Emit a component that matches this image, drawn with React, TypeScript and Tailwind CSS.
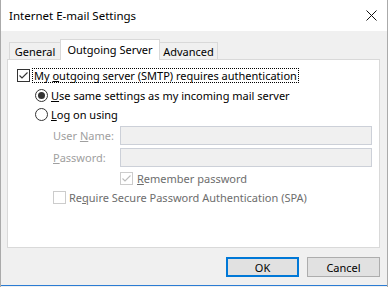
import React from "react";

const font = { fontFamily: '"Noto Sans", sans-serif' };

function CheckBox({ checked, disabled }: { checked?: boolean; disabled?: boolean }) {
  const border = disabled ? "border-[#cccccc]" : "border-[#333333]";
  return (
    <div className={`w-[13px] h-[13px] border ${border} bg-white flex items-center justify-center shrink-0`}>
      {checked && (
        <svg width="11" height="11" viewBox="0 0 11 11">
          <path d="M1.5 5.5 L4 8 L9.5 2.5" fill="none" stroke={disabled ? "#bcbcbc" : "#333333"} strokeWidth="1.1" />
        </svg>
      )}
    </div>
  );
}

function Radio({ checked }: { checked?: boolean }) {
  return (
    <div className="w-[13px] h-[13px] rounded-full border border-[#333333] bg-white flex items-center justify-center shrink-0">
      {checked && <div className="w-[7px] h-[7px] rounded-full bg-[#333333]" />}
    </div>
  );
}

export default function App() {
  return (
    <div
      className="w-[388px] h-[287px] bg-[#f0f0f0] border-l border-r border-[#aaaaaa] flex flex-col text-[11px] text-black overflow-hidden"
      style={font}
    >
      {/* Title bar */}
      <div className="h-[31px] bg-white flex items-center justify-between pl-[8px] pr-[9px] shrink-0">
        <span className="text-[11.5px] leading-none">Internet E-mail Settings</span>
        <svg width="11" height="11" viewBox="0 0 11 11" className="mr-[1px]">
          <path d="M0.5 0.5 L10.5 10.5 M10.5 0.5 L0.5 10.5" stroke="#111" strokeWidth="1" />
        </svg>
      </div>

      {/* Tabs */}
      <div className="flex items-end pl-[8px] mt-[7px] h-[21px] relative z-10">
        <div className="h-[17px] w-[52px] border border-b-0 border-[#d9d9d9] flex items-center justify-center leading-none pt-[1px]">
          General
        </div>
        <div className="h-[21px] w-[100px] -ml-px bg-white border border-b-0 border-[#d9d9d9] flex items-start pt-[4px] justify-center leading-none -mb-px">
          <span>Outgoing Server</span>
        </div>
        <div className="h-[17px] w-[59px] -ml-px border border-b-0 border-[#d9d9d9] flex items-center justify-center leading-none pt-[1px]">
          Advanced
        </div>
      </div>

      {/* Panel */}
      <div className="ml-[6px] w-[373px] h-[189px] bg-white border border-[#d9d9d9] flex flex-col shrink-0">
        <div className="mt-[8px] h-[15px] flex items-center pl-[9px]">
          <CheckBox checked />
          <span className="ml-[2px] h-[15px] px-[1px] border border-dotted border-black flex items-center leading-none whitespace-nowrap">
            My&nbsp;<u>o</u>utgoing server (SMTP) requires authentication
          </span>
        </div>
        <div className="mt-[5px] h-[15px] flex items-center pl-[27px]">
          <Radio checked />
          <span className="ml-[3px] leading-none whitespace-nowrap">
            <u>U</u>se same settings as my incoming mail server
          </span>
        </div>
        <div className="mt-[4px] h-[15px] flex items-center pl-[27px]">
          <Radio />
          <span className="ml-[3px] leading-none whitespace-nowrap">
            <u>L</u>og on using
          </span>
        </div>
        <div className="mt-[4px] h-[19px] flex items-center pl-[45px]">
          <span className="w-[67px] text-[#a0a0a0] leading-none whitespace-nowrap">
            User <u>N</u>ame:
          </span>
          <div className="w-[252px] h-[19px] bg-[#f0f0f0] border border-[#ccd0d8]" />
        </div>
        <div className="mt-[3px] h-[19px] flex items-center pl-[45px]">
          <span className="w-[67px] text-[#a0a0a0] leading-none whitespace-nowrap">
            <u>P</u>assword:
          </span>
          <div className="w-[252px] h-[19px] bg-[#f0f0f0] border border-[#ccd0d8]" />
        </div>
        <div className="mt-[4px] h-[15px] flex items-center pl-[112px]">
          <CheckBox checked disabled />
          <span className="ml-[4px] text-[#6d6d6d] leading-none whitespace-nowrap">
            <u>R</u>emember password
          </span>
        </div>
        <div className="mt-[4px] h-[15px] flex items-center pl-[45px]">
          <CheckBox disabled />
          <span className="ml-[3px] text-[#6d6d6d] leading-none whitespace-nowrap">
            Re<u>q</u>uire Secure Password Authentication (SPA)
          </span>
        </div>
      </div>

      {/* Buttons */}
      <div className="flex justify-end gap-[8px] pr-[7px] mt-[9px]">
        <button className="w-[73px] h-[20px] bg-[#e1e1e1] border-2 border-[#0078d7] flex items-center justify-center leading-none">
          OK
        </button>
        <button className="w-[73px] h-[20px] bg-[#e1e1e1] border border-[#adadad] flex items-center justify-center leading-none">
          Cancel
        </button>
      </div>

      <div className="mt-[8px] h-px bg-[#2b7cd3] shrink-0" />
    </div>
  );
}
